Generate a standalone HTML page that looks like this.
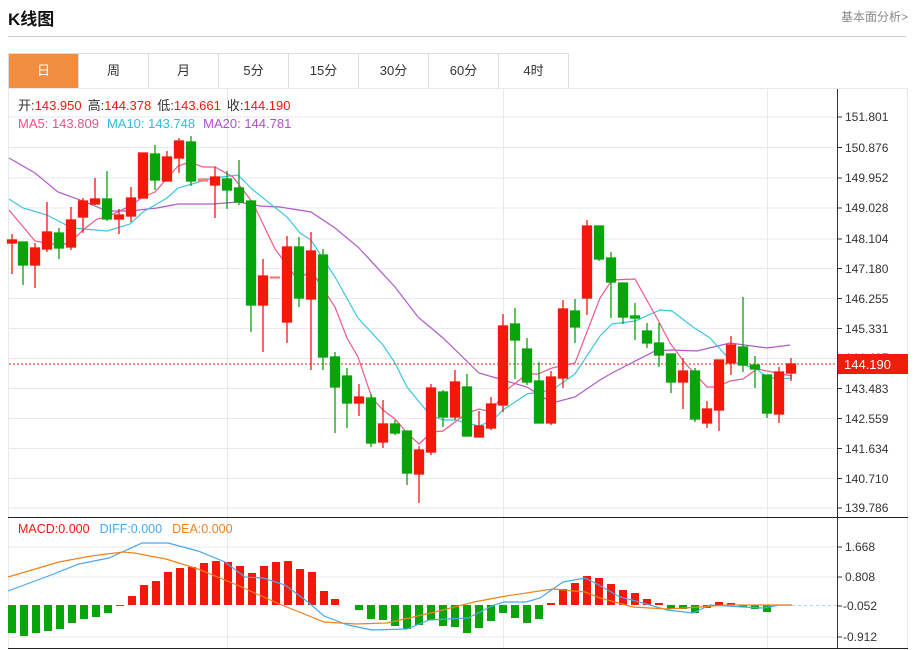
<!DOCTYPE html>
<html><head><meta charset="utf-8"><style>
body{margin:0;background:#fff;width:914px;height:650px;overflow:hidden;font-family:"Liberation Sans","Noto Sans CJK SC",sans-serif;}
.t{position:absolute;left:8px;top:5px;font-size:17px;font-weight:bold;color:#111;}
.r{position:absolute;right:6px;top:8px;font-size:12px;color:#888;}
.hl{position:absolute;left:8px;top:36px;width:898px;height:1px;background:#ccc;}
.tabs{position:absolute;left:8px;top:53px;height:34px;display:flex;border:1px solid #ddd;border-right:none;}
.tabs div{width:69px;border-right:1px solid #ddd;text-align:center;line-height:34px;font-size:13px;color:#333;}
.tabs .a{background:#f18d3f;color:#fff;}
</style></head><body>
<div class="t">K线图</div><div class="r">基本面分析&gt;</div><div class="hl"></div>
<div class="tabs"><div class="a">日</div><div>周</div><div>月</div><div>5分</div><div>15分</div><div>30分</div><div>60分</div><div>4时</div></div>
<svg width="914" height="650" style="position:absolute;left:0;top:0" font-family="Liberation Sans, Noto Sans CJK SC, sans-serif">
<g stroke="#e4eaf0" stroke-width="1">
<line x1="9" x2="837" y1="117" y2="117"/><line x1="9" x2="837" y1="147.5" y2="147.5"/><line x1="9" x2="837" y1="178" y2="178"/><line x1="9" x2="837" y1="208" y2="208"/><line x1="9" x2="837" y1="239" y2="239"/><line x1="9" x2="837" y1="268.5" y2="268.5"/><line x1="9" x2="837" y1="298.5" y2="298.5"/><line x1="9" x2="837" y1="328.5" y2="328.5"/><line x1="9" x2="837" y1="358.5" y2="358.5"/><line x1="9" x2="837" y1="388.5" y2="388.5"/><line x1="9" x2="837" y1="418.5" y2="418.5"/><line x1="9" x2="837" y1="448.5" y2="448.5"/><line x1="9" x2="837" y1="478.5" y2="478.5"/><line x1="9" x2="837" y1="508" y2="508"/>
<line x1="9" x2="837" y1="547" y2="547"/><line x1="9" x2="837" y1="577" y2="577"/><line x1="9" x2="837" y1="637" y2="637"/>
<line x1="227.5" x2="227.5" y1="89" y2="648"/><line x1="503.5" x2="503.5" y1="89" y2="648"/><line x1="767.5" x2="767.5" y1="89" y2="648"/>
<line x1="8.5" x2="8.5" y1="88" y2="648"/><line x1="8" x2="907" y1="88.5" y2="88.5"/><line x1="907.5" x2="907.5" y1="88" y2="648"/>
</g>
<line x1="837.5" x2="837.5" y1="89" y2="648" stroke="#333"/>
<line x1="8" x2="908" y1="517.5" y2="517.5" stroke="#222"/>
<line x1="8" x2="908" y1="648.5" y2="648.5" stroke="#222"/>
<g stroke="#333"><line x1="837" x2="842" y1="117" y2="117"/><line x1="837" x2="842" y1="147.5" y2="147.5"/><line x1="837" x2="842" y1="178" y2="178"/><line x1="837" x2="842" y1="208" y2="208"/><line x1="837" x2="842" y1="239" y2="239"/><line x1="837" x2="842" y1="268.5" y2="268.5"/><line x1="837" x2="842" y1="298.5" y2="298.5"/><line x1="837" x2="842" y1="328.5" y2="328.5"/><line x1="837" x2="842" y1="388.5" y2="388.5"/><line x1="837" x2="842" y1="418.5" y2="418.5"/><line x1="837" x2="842" y1="448.5" y2="448.5"/><line x1="837" x2="842" y1="478.5" y2="478.5"/><line x1="837" x2="842" y1="508" y2="508"/><line x1="837" x2="842" y1="547" y2="547"/><line x1="837" x2="842" y1="577" y2="577"/><line x1="837" x2="842" y1="606" y2="606"/><line x1="837" x2="842" y1="637" y2="637"/></g>
<g font-size="12" fill="#333">
<text x="845" y="121">151.801</text><text x="845" y="152">150.876</text><text x="845" y="182">149.952</text><text x="845" y="212">149.028</text><text x="845" y="243">148.104</text><text x="845" y="273">147.180</text><text x="845" y="303">146.255</text><text x="845" y="333">145.331</text><text x="845" y="362">144.407</text><text x="845" y="393">143.483</text><text x="845" y="423">142.559</text><text x="845" y="453">141.634</text><text x="845" y="483">140.710</text><text x="845" y="512">139.786</text>
<text x="845" y="551">1.668</text><text x="845" y="581">0.808</text><text x="843" y="610">-0.052</text><text x="843" y="641">-0.912</text>
</g>
<line x1="9" x2="837" y1="364" y2="364" stroke="#f46a5a" stroke-width="1.5" stroke-dasharray="2,2"/>
<line x1="780" x2="837" y1="605.5" y2="605.5" stroke="#a8d8ee" stroke-dasharray="3,3"/>
<rect x="838" y="354" width="70" height="20" fill="#f01d0a"/>
<text x="844" y="369" font-size="13" fill="#fff">144.190</text>
<!-- MA lines -->
<polyline fill="none" stroke="#b05ac8" stroke-width="1.2" points="9,158 35,173 58,192 83,201 107,211 130,211 157,208 178,204 213,204 238,202 260,206 280,207 311,212 335,228 358,247 395,287 418,317 443,338 479,373 503,380 527,387 552,403 575,397 600,380 612,373 655,351 672,350 697,351 730,343 767,348 790,345"/>
<polyline fill="none" stroke="#3cc6de" stroke-width="1.2" points="9,199 23,208 47,215 72,228 107,231 130,224 143,212 167,198 178,188 213,178 238,175 253,190 287,217 300,233 311,240 335,277 358,318 383,345 395,363 407,387 430,415 443,420 455,420 479,426 493,420 503,410 527,394 552,390 575,374 600,336 612,324 635,321 660,310 672,311 693,327 710,338 732,362 755,368 767,377 780,379 792,378"/>
<polyline fill="none" stroke="#f0588a" stroke-width="1.2" points="9,210 35,241 58,245 70,243 83,230 97,219 107,217 130,206 143,197 155,192 178,166 190,162 203,167 215,167 233,177 253,203 275,249 298,280 311,270 335,307 347,338 358,357 372,398 383,410 395,419 407,433 419,444 432,432 443,431 467,413 479,409 492,412 503,393 527,374 538,374 552,368 575,363 600,298 612,280 635,279 658,320 670,343 685,363 707,387 717,387 730,381 743,379 757,369 792,376"/>
<!-- red candles -->
<g fill="#f2190a" stroke="#f2190a" stroke-width="1.3">
<line x1="12" x2="12" y1="234" y2="274"/><rect x="7.5" y="240" width="9" height="3"/>
<line x1="35" x2="35" y1="243" y2="288"/><rect x="30.5" y="248" width="9" height="17"/>
<line x1="47" x2="47" y1="202" y2="252"/><rect x="42.5" y="232" width="9" height="17"/>
<line x1="71" x2="71" y1="207" y2="250"/><rect x="66.5" y="220" width="9" height="27"/>
<line x1="83" x2="83" y1="198" y2="233"/><rect x="78.5" y="201" width="9" height="16"/>
<line x1="95" x2="95" y1="178" y2="205"/><rect x="90.5" y="199" width="9" height="5"/>
<line x1="119" x2="119" y1="209" y2="234"/><rect x="114.5" y="215" width="9" height="4"/>
<line x1="131" x2="131" y1="187" y2="222"/><rect x="126.5" y="198" width="9" height="18"/>
<rect x="138.5" y="153" width="9" height="45"/>
<rect x="162.5" y="157" width="9" height="24"/><line x1="167" x2="167" y1="151" y2="157"/>
<line x1="179" x2="179" y1="138" y2="173"/><rect x="174.5" y="141" width="9" height="17"/>
<rect x="198.5" y="179" width="9" height="2" fill="#f08080" stroke="#f08080"/>
<line x1="215" x2="215" y1="167" y2="218"/><rect x="210.5" y="177" width="9" height="8"/>
<line x1="263" x2="263" y1="259" y2="352"/><rect x="258.5" y="276" width="9" height="29"/>
<rect x="270.5" y="277" width="9" height="1" fill="#f08080" stroke="#f08080"/>
<line x1="287" x2="287" y1="236" y2="343"/><rect x="282.5" y="247" width="9" height="75"/>
<line x1="311" x2="311" y1="232" y2="370"/><rect x="306.5" y="251" width="9" height="48"/>
<line x1="359" x2="359" y1="384" y2="416"/><rect x="354.5" y="397" width="9" height="6"/>
<line x1="383" x2="383" y1="400" y2="448"/><rect x="378.5" y="424" width="9" height="18"/>
<line x1="419" x2="419" y1="446" y2="503"/><rect x="414.5" y="450" width="9" height="24"/>
<line x1="431" x2="431" y1="384" y2="455"/><rect x="426.5" y="388" width="9" height="64"/>
<line x1="455" x2="455" y1="370" y2="420"/><rect x="450.5" y="382" width="9" height="35"/>
<line x1="479" x2="479" y1="411" y2="437"/><rect x="474.5" y="426" width="9" height="11"/>
<line x1="491" x2="491" y1="397" y2="430"/><rect x="486.5" y="404" width="9" height="24"/>
<line x1="503" x2="503" y1="314" y2="412"/><rect x="498.5" y="326" width="9" height="79"/>
<line x1="551" x2="551" y1="371" y2="425"/><rect x="546.5" y="377" width="9" height="46"/>
<line x1="563" x2="563" y1="300" y2="388"/><rect x="558.5" y="309" width="9" height="69"/>
<line x1="587" x2="587" y1="220" y2="315"/><rect x="582.5" y="226" width="9" height="72"/>
<line x1="683" x2="683" y1="358" y2="409"/><rect x="678.5" y="371" width="9" height="11"/>
<line x1="707" x2="707" y1="401" y2="428"/><rect x="702.5" y="409" width="9" height="14"/>
<line x1="719" x2="719" y1="360" y2="431"/><rect x="714.5" y="360" width="9" height="50"/>
<line x1="731" x2="731" y1="336" y2="375"/><rect x="726.5" y="345" width="9" height="18"/>
<line x1="779" x2="779" y1="367" y2="423"/><rect x="774.5" y="372" width="9" height="42"/>
<line x1="791" x2="791" y1="358" y2="381"/><rect x="786.5" y="364" width="9" height="9"/>
</g>
<!-- green candles -->
<g fill="#07a40a" stroke="#07a40a" stroke-width="1.3">
<line x1="23" x2="23" y1="242" y2="285"/><rect x="18.5" y="242" width="9" height="23"/>
<line x1="59" x2="59" y1="228" y2="259"/><rect x="54.5" y="233" width="9" height="15"/>
<line x1="107" x2="107" y1="171" y2="221"/><rect x="102.5" y="199" width="9" height="20"/>
<line x1="155" x2="155" y1="145" y2="190"/><rect x="150.5" y="154" width="9" height="26"/>
<line x1="191" x2="191" y1="136" y2="186"/><rect x="186.5" y="142" width="9" height="39"/>
<line x1="227" x2="227" y1="171" y2="209"/><rect x="222.5" y="179" width="9" height="11"/>
<line x1="239" x2="239" y1="160" y2="205"/><rect x="234.5" y="188" width="9" height="14"/>
<line x1="251" x2="251" y1="201" y2="332"/><rect x="246.5" y="201" width="9" height="104"/>
<line x1="299" x2="299" y1="237" y2="307"/><rect x="294.5" y="247" width="9" height="51"/>
<line x1="323" x2="323" y1="249" y2="370"/><rect x="318.5" y="255" width="9" height="102"/>
<line x1="335" x2="335" y1="352" y2="433"/><rect x="330.5" y="357" width="9" height="30"/>
<line x1="347" x2="347" y1="368" y2="428"/><rect x="342.5" y="376" width="9" height="27"/>
<line x1="371" x2="371" y1="394" y2="447"/><rect x="366.5" y="398" width="9" height="45"/>
<line x1="395" x2="395" y1="420" y2="435"/><rect x="390.5" y="424" width="9" height="9"/>
<line x1="407" x2="407" y1="431" y2="485"/><rect x="402.5" y="431" width="9" height="42"/>
<line x1="443" x2="443" y1="390" y2="427"/><rect x="438.5" y="392" width="9" height="25"/>
<line x1="467" x2="467" y1="374" y2="436"/><rect x="462.5" y="387" width="9" height="49"/>
<line x1="515" x2="515" y1="308" y2="379"/><rect x="510.5" y="324" width="9" height="16"/>
<line x1="527" x2="527" y1="338" y2="385"/><rect x="522.5" y="349" width="9" height="33"/>
<line x1="539" x2="539" y1="362" y2="423"/><rect x="534.5" y="381" width="9" height="42"/>
<line x1="575" x2="575" y1="299" y2="343"/><rect x="570.5" y="311" width="9" height="16"/>
<line x1="599" x2="599" y1="226" y2="261"/><rect x="594.5" y="226" width="9" height="33"/>
<line x1="611" x2="611" y1="252" y2="318"/><rect x="606.5" y="258" width="9" height="24"/>
<line x1="623" x2="623" y1="283" y2="324"/><rect x="618.5" y="283" width="9" height="34"/>
<line x1="635" x2="635" y1="303" y2="340"/><rect x="630.5" y="316" width="9" height="2"/>
<line x1="647" x2="647" y1="323" y2="348"/><rect x="642.5" y="331" width="9" height="12"/>
<line x1="659" x2="659" y1="323" y2="367"/><rect x="654.5" y="343" width="9" height="12"/>
<line x1="671" x2="671" y1="354" y2="393"/><rect x="666.5" y="354" width="9" height="28"/>
<line x1="695" x2="695" y1="368" y2="422"/><rect x="690.5" y="371" width="9" height="48"/>
<line x1="743" x2="743" y1="297" y2="372"/><rect x="738.5" y="347" width="9" height="18"/>
<line x1="755" x2="755" y1="356" y2="388"/><rect x="750.5" y="365" width="9" height="4"/>
<line x1="767" x2="767" y1="375" y2="418"/><rect x="762.5" y="375" width="9" height="38"/>
</g>
<!-- MACD bars -->
<g fill="#07a40a">
<rect x="8" y="605" width="8" height="28"/><rect x="20" y="605" width="8" height="31"/><rect x="32" y="605" width="8" height="28"/><rect x="44" y="605" width="8" height="26"/><rect x="56" y="605" width="8" height="24"/><rect x="68" y="605" width="8" height="18"/><rect x="80" y="605" width="8" height="14"/><rect x="92" y="605" width="8" height="12"/><rect x="104" y="605" width="8" height="8"/><rect x="116" y="605" width="8" height="1"/>
<rect x="355" y="605" width="8" height="5"/><rect x="367" y="605" width="8" height="14"/><rect x="379" y="605" width="8" height="15"/><rect x="391" y="605" width="8" height="21"/><rect x="403" y="605" width="8" height="24"/><rect x="415" y="605" width="8" height="20"/><rect x="427" y="605" width="8" height="15"/><rect x="439" y="605" width="8" height="21"/><rect x="451" y="605" width="8" height="22"/><rect x="463" y="605" width="8" height="28"/><rect x="475" y="605" width="8" height="23"/><rect x="487" y="605" width="8" height="16"/><rect x="499" y="605" width="8" height="8"/><rect x="511" y="605" width="8" height="13"/><rect x="523" y="605" width="8" height="18"/><rect x="535" y="605" width="8" height="14"/>
<rect x="667" y="605" width="8" height="4"/><rect x="679" y="605" width="8" height="4"/><rect x="691" y="605" width="8" height="8"/><rect x="703" y="605" width="8" height="3"/><rect x="739" y="605" width="8" height="2"/><rect x="751" y="605" width="8" height="4"/><rect x="763" y="605" width="8" height="7"/>
</g>
<g fill="#f2190a">
<rect x="128" y="596" width="8" height="9"/><rect x="140" y="585" width="8" height="20"/><rect x="152" y="581" width="8" height="24"/><rect x="164" y="572" width="8" height="33"/><rect x="176" y="568" width="8" height="37"/><rect x="188" y="567" width="8" height="38"/><rect x="200" y="563" width="8" height="42"/><rect x="212" y="561" width="8" height="44"/><rect x="224" y="562" width="8" height="43"/><rect x="236" y="566" width="8" height="39"/><rect x="248" y="573" width="8" height="32"/><rect x="260" y="566" width="8" height="39"/><rect x="272" y="562" width="8" height="43"/><rect x="284" y="561" width="8" height="44"/><rect x="296" y="569" width="8" height="36"/><rect x="308" y="572" width="8" height="33"/><rect x="320" y="591" width="8" height="14"/><rect x="331" y="599" width="8" height="6"/>
<rect x="547" y="603" width="8" height="2"/><rect x="559" y="589" width="8" height="16"/><rect x="571" y="583" width="8" height="22"/><rect x="583" y="576" width="8" height="29"/><rect x="595" y="578" width="8" height="27"/><rect x="607" y="584" width="8" height="21"/><rect x="619" y="590" width="8" height="15"/><rect x="631" y="593" width="8" height="12"/><rect x="643" y="599" width="8" height="6"/><rect x="655" y="603" width="8" height="2"/><rect x="715" y="602" width="8" height="3"/><rect x="727" y="603" width="8" height="2"/>
</g>
<polyline fill="none" stroke="#4aa8f0" stroke-width="1.2" points="8,591 51,575 79,564 109,558 142,543 168,543 198,551 225,562 245,577 263,578 285,585 308,602 324,616 348,625 372,630 407,629 429,620 447,619 468,618 494,605 504,602 526,602 540,598 563,582 585,578 597,584 620,597 643,603 667,610 693,613 710,605 727,606 743,607 763,608 780,605 792,605"/>
<polyline fill="none" stroke="#f5801e" stroke-width="1.2" points="8,577 59,562 91,556 123,552 134,553 166,559 198,569 237,585 277,603 324,622 356,624 387,623 435,612 474,602 506,596 553,589 585,592 600,598 633,607 667,609 700,607 727,605 792,605"/>
<!-- legends -->
<g font-size="13">
<text x="18" y="110"><tspan fill="#333">开:</tspan><tspan fill="#f2190a">143.950</tspan><tspan fill="#333" dx="6">高:</tspan><tspan fill="#f2190a">144.378</tspan><tspan fill="#333" dx="6">低:</tspan><tspan fill="#f2190a">143.661</tspan><tspan fill="#333" dx="6">收:</tspan><tspan fill="#f2190a">144.190</tspan></text>
<text x="18" y="128"><tspan fill="#f0508a">MA5: 143.809</tspan><tspan fill="#2cc0da" dx="8">MA10: 143.748</tspan><tspan fill="#b050c8" dx="8">MA20: 144.781</tspan></text>
<text x="18" y="533" font-size="12.5"><tspan fill="#f2190a">MACD:0.000</tspan><tspan fill="#4aa8f0" dx="10">DIFF:0.000</tspan><tspan fill="#f5801e" dx="10">DEA:0.000</tspan></text>
</g>
</svg>
</body></html>
